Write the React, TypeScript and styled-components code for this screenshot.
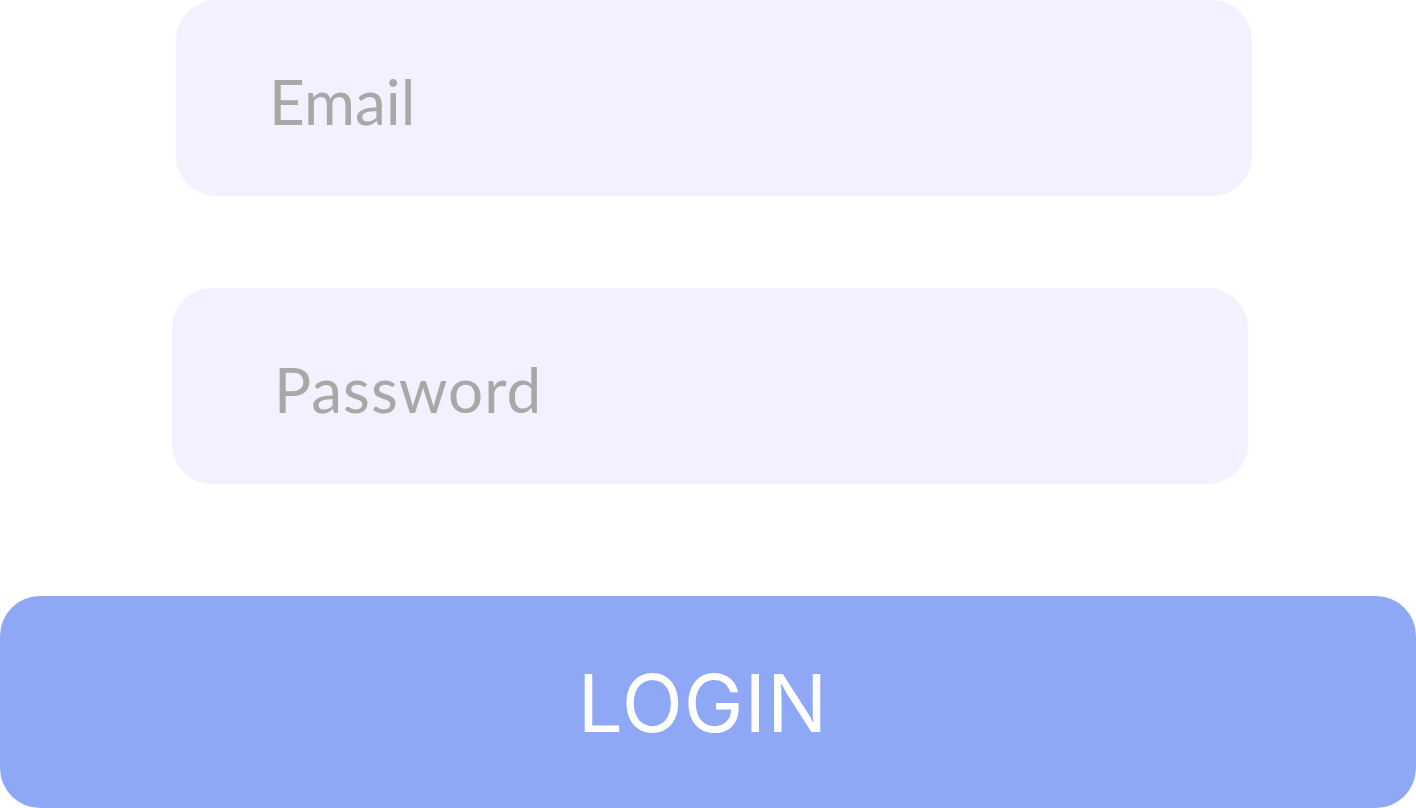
import { createGlobalStyle, styled } from 'styled-components';

const GlobalStyle = createGlobalStyle`
  html, body {
    margin: 0;
    padding: 0;
    background: #ffffff;
    overflow: hidden;
  }
`;

const Page = styled.form`
  width: 1416px;
  height: 808px;
  display: flex;
  flex-direction: column;
  background: #ffffff;
`;

const Field = styled.input<{ $offset: number; $indent: number; $top: number; $spacing: number }>`
  box-sizing: border-box;
  width: 1076px;
  height: 196px;
  margin: ${({ $top }) => $top}px 0 0 ${({ $offset }) => $offset}px;
  padding: 6px 0 0 ${({ $indent }) => $indent}px;
  border: none;
  outline: none;
  border-radius: 40px;
  background: #f3f1ff;
  font-family: Lato, 'Open Sans', sans-serif;
  font-size: 62px;
  letter-spacing: ${({ $spacing }) => $spacing}px;
  color: #a8a8a6;

  &::placeholder {
    color: #a8a8a6;
    opacity: 1;
  }
`;

const LoginButton = styled.button`
  box-sizing: border-box;
  width: 1416px;
  height: 212px;
  margin-top: 112px;
  padding: 0 10px 0 0;
  border: none;
  border-radius: 40px;
  background: #8ea8f5;
  color: #ffffff;
  font-family: Inter, 'Open Sans', sans-serif;
  font-size: 80px;
  font-weight: 400;
  letter-spacing: 1px;
  cursor: pointer;
`;

const App = () => {
  return (
    <>
      <GlobalStyle />
      <Page onSubmit={(e) => e.preventDefault()}>
        <Field type="email" placeholder="Email" $offset={176} $indent={93} $top={0} $spacing={0} />
        <Field type="password" placeholder="Password" $offset={172} $indent={102} $top={92} $spacing={1} />
        <LoginButton type="submit">LOGIN</LoginButton>
      </Page>
    </>
  );
};

export default App;
